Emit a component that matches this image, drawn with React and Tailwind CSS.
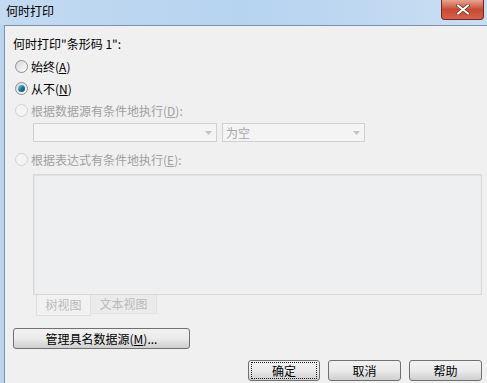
import React from 'react'

const font = { fontFamily: '"Microsoft YaHei", "Noto Sans CJK SC", "Noto Sans", sans-serif' }

function Radio({ checked, disabled }) {
  return (
    <span
      className={`relative inline-flex h-[13px] w-[13px] shrink-0 items-center justify-center rounded-full border ${
        disabled ? 'border-[#cfd2d6] bg-[#f4f4f4]' : 'border-[#8e8f8f] bg-gradient-to-br from-[#d8d8d8] to-[#fcfcfc]'
      }`}
    >
      {checked && (
        <span className="h-[7px] w-[7px] rounded-full bg-gradient-to-br from-[#8ad4f0] via-[#1e7ba3] to-[#0c4a6a]" />
      )}
    </span>
  )
}

function RadioRow({ label, hotkey, rest = '', checked, disabled }) {
  return (
    <div className={`flex items-center gap-[3px] ${disabled ? 'text-[#a0a0a0]' : 'text-black'}`}>
      <Radio checked={checked} disabled={disabled} />
      <span>
        {label}(<span className="underline">{hotkey}</span>){rest}
      </span>
    </div>
  )
}

function Combo({ width, text }) {
  return (
    <div
      className="flex h-[19px] items-center justify-between border border-[#d0d0d0] bg-[#f4f4f4] pl-[3px] pr-[4px] text-[#a6a6a6]"
      style={{ width }}
    >
      <span>{text}</span>
      <svg width="7" height="4" viewBox="0 0 7 4">
        <path d="M0 0h7L3.5 4z" fill="#c4c4c4" />
      </svg>
    </div>
  )
}

function Button({ children, className = '', focused }) {
  return (
    <div
      className={`flex h-[21px] items-center justify-center rounded-[3px] border border-[#707070] bg-gradient-to-b from-[#f2f2f2] via-[#ebebeb] to-[#cfcfcf] text-black ${className}`}
    >
      {focused ? (
        <div className="flex h-[17px] w-[calc(100%-4px)] items-center justify-center border border-dotted border-[#1a1a1a]">
          {children}
        </div>
      ) : (
        children
      )}
    </div>
  )
}

export default function App() {
  return (
    <div className="h-[383px] w-[487px] overflow-hidden bg-[#bcd5ee] text-[12px] leading-none" style={font}>
      {/* title bar */}
      <div className="flex h-[25px] items-start justify-between bg-gradient-to-r from-[#c3daf1] via-[#b6d3f0] to-[#c9def3]">
        <span className="pl-[6px] pt-[5px] text-[12px] text-black">何时打印</span>
        <div className="mr-[3px] flex h-[20px] w-[43px] items-center justify-center rounded-b-[4px] border border-t-0 border-[#6b2a24] bg-gradient-to-b from-[#e7a391] via-[#c94a34] to-[#d8604a]">
          <svg width="14" height="11" viewBox="0 0 14 11">
            <path d="M2 1.5l10 8M12 1.5l-10 8" stroke="#5a2a22" strokeWidth="3.4" strokeLinecap="square" />
            <path d="M2 1.5l10 8M12 1.5l-10 8" stroke="#ffffff" strokeWidth="2" strokeLinecap="square" />
          </svg>
        </div>
      </div>

      {/* body */}
      <div className="flex h-[358px] pl-[4px]">
        <div className="flex flex-1 flex-col border-l border-t border-[#7b92ab] bg-[#f0f0f0] pl-[8px]">
          <div className="mt-[12px] text-black">何时打印"条形码 1":</div>

          <div className="ml-[2px] mt-[10px] flex flex-col gap-[9px]">
            <RadioRow label="始终" hotkey="A" />
            <RadioRow label="从不" hotkey="N" checked />
            <RadioRow label="根据数据源有条件地执行" hotkey="D" rest=":" disabled />
          </div>

          <div className="ml-[20px] mt-[6px] flex gap-[5px]">
            <Combo width={184} text="" />
            <Combo width={143} text="为空" />
          </div>

          <div className="ml-[2px] mt-[11px]">
            <RadioRow label="根据表达式有条件地执行" hotkey="E" rest=":" disabled />
          </div>

          <div className="ml-[20px] mt-[8px] mr-[5px] h-[121px] border border-[#d8d8d8] bg-[#eeeff1] shadow-[inset_1px_1px_0_#e2e3e5]" />

          <div className="ml-[23px] flex text-[#b9b9b9]">
            <div className="flex h-[21px] w-[55px] items-center justify-center border border-t-0 border-[#dedede] bg-[#f2f2f2]">
              树视图
            </div>
            <div className="flex h-[19px] w-[66px] items-center justify-center border border-l-0 border-t-0 border-[#e2e2e2] bg-[#ebebeb]">
              文本视图
            </div>
          </div>

          <div className="mt-[12px]">
            <Button className="w-[177px]">
              管理具名数据源(<span className="underline">M</span>)...
            </Button>
          </div>

          <div className="mt-[11px] flex justify-end gap-[8px] pr-[5px]">
            <Button className="w-[72px]" focused>确定</Button>
            <Button className="w-[73px]">取消</Button>
            <Button className="w-[73px]">帮助</Button>
          </div>
        </div>
      </div>
    </div>
  )
}
